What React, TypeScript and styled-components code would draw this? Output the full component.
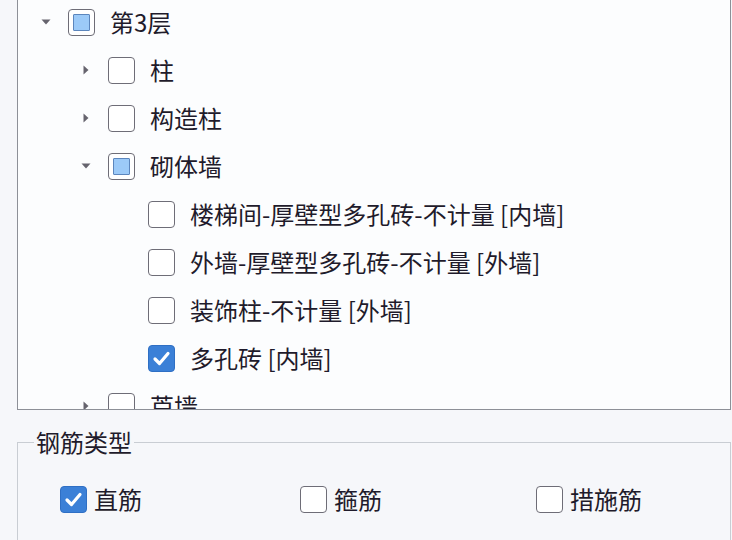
import styled, { createGlobalStyle } from 'styled-components'

const GlobalStyle = createGlobalStyle`
  html, body {
    margin: 0;
    padding: 0;
    background: #f6f7fa;
    font-family: "Noto Sans CJK SC", "Noto Sans", sans-serif;
    color: #1f1b2b;
  }
`

const Page = styled.div`
  width: 732px;
  height: 540px;
  overflow: hidden;
  padding-left: 17px;
  padding-right: 1px;
  box-sizing: border-box;
`

const TreePanel = styled.div`
  height: 410px;
  box-sizing: border-box;
  border: 1px solid #8d9097;
  border-top: none;
  background: #fcfdfe;
  overflow: hidden;
`

const TreeList = styled.div`
  margin-top: -2px;
  display: flex;
  flex-direction: column;
`

const Row = styled.div<{ $level: number }>`
  height: 48px;
  display: flex;
  align-items: center;
  padding-left: ${p => 18 + p.$level * 40}px;
`

const Toggle = styled.span`
  width: 20px;
  height: 20px;
  margin-right: 12px;
  display: flex;
  align-items: center;
  justify-content: center;
  flex-shrink: 0;
`

const Label = styled.span`
  font-size: 24px;
  line-height: 28px;
  white-space: nowrap;
  margin-left: 15px;
`

type CheckState = 'none' | 'partial' | 'checked'

const Box = styled.span<{ $state: CheckState }>`
  width: 27px;
  height: 27px;
  box-sizing: border-box;
  border-radius: 4px;
  flex-shrink: 0;
  display: flex;
  align-items: center;
  justify-content: center;
  border: 1.5px solid ${p => (p.$state === 'checked' ? '#2f6fc4' : '#6e6d77')};
  background: ${p => (p.$state === 'checked' ? '#3b80d7' : '#ffffff')};
`

const Fill = styled.span`
  width: 17px;
  height: 17px;
  box-sizing: border-box;
  border: 1px solid #5c86bd;
  background: #9ccaf8;
  border-radius: 1px;
`

function Check({ state }: { state: CheckState }) {
  return (
    <Box $state={state}>
      {state === 'partial' && <Fill />}
      {state === 'checked' && (
        <svg width="19" height="19" viewBox="0 0 19 19">
          <path d="M3 10 L7.5 14.5 L16 4.5" fill="none" stroke="#ffffff" strokeWidth="3.2" strokeLinecap="round" strokeLinejoin="round" />
        </svg>
      )}
    </Box>
  )
}

function Arrow({ open }: { open?: boolean }) {
  return (
    <svg width="12" height="12" viewBox="0 0 12 12">
      {open ? (
        <path d="M1.5 3.5 L10.5 3.5 L6 8.5 Z" fill="#66646e" />
      ) : (
        <path d="M3.5 1.5 L8.5 6 L3.5 10.5 Z" fill="#66646e" />
      )}
    </svg>
  )
}

type Node = { level: number; label: string; state: CheckState; open?: boolean; leaf?: boolean }

const nodes: Node[] = [
  { level: 0, label: '第3层', state: 'partial', open: true },
  { level: 1, label: '柱', state: 'none' },
  { level: 1, label: '构造柱', state: 'none' },
  { level: 1, label: '砌体墙', state: 'partial', open: true },
  { level: 2, label: '楼梯间-厚壁型多孔砖-不计量 [内墙]', state: 'none', leaf: true },
  { level: 2, label: '外墙-厚壁型多孔砖-不计量 [外墙]', state: 'none', leaf: true },
  { level: 2, label: '装饰柱-不计量 [外墙]', state: 'none', leaf: true },
  { level: 2, label: '多孔砖 [内墙]', state: 'checked', leaf: true },
  { level: 1, label: '芦墙', state: 'none' },
]

const Group = styled.fieldset`
  margin: 20px 0 0;
  padding: 0;
  border: 1px solid #c9cdd3;
  border-bottom: none;
  height: 200px;
  min-width: 0;
`

const Legend = styled.legend`
  margin-left: 16px;
  padding: 0 2px;
  font-size: 24px;
  line-height: 24px;
`

const Options = styled.div`
  display: grid;
  grid-template-columns: 240px 236px 200px;
  padding: 31px 0 0 42px;
`

const Option = styled.div`
  display: flex;
  align-items: center;
  gap: 7px;
  font-size: 24px;
  line-height: 28px;
`

export default function App() {
  return (
    <>
      <GlobalStyle />
      <Page>
        <TreePanel>
          <TreeList>
            {nodes.map((n, i) => (
              <Row key={i} $level={n.level}>
                <Toggle>{!n.leaf && <Arrow open={n.open} />}</Toggle>
                <Check state={n.state} />
                <Label>{n.label}</Label>
              </Row>
            ))}
          </TreeList>
        </TreePanel>
        <Group>
          <Legend>钢筋类型</Legend>
          <Options>
            <Option><Check state="checked" />直筋</Option>
            <Option><Check state="none" />箍筋</Option>
            <Option><Check state="none" />措施筋</Option>
          </Options>
        </Group>
      </Page>
    </>
  )
}
